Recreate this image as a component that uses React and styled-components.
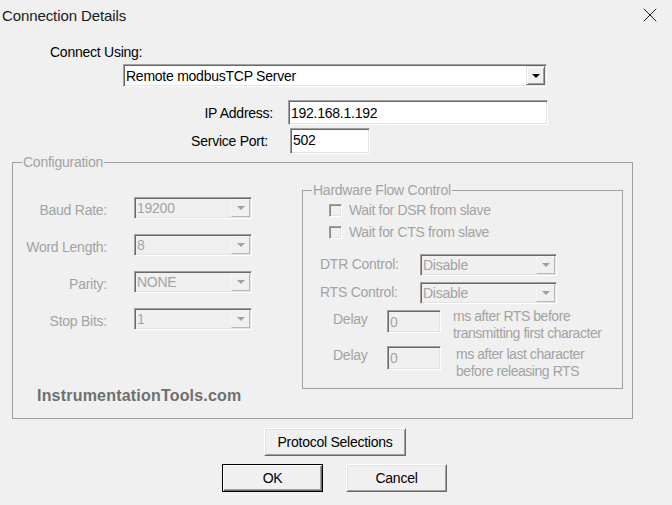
import React from 'react';
import styled, { createGlobalStyle } from 'styled-components';
import { X } from 'lucide-react';

const GlobalStyle = createGlobalStyle`
  html, body {
    margin: 0;
    padding: 0;
    background: #f0f0f0;
  }
  body {
    font-family: "Liberation Sans", Arial, sans-serif;
    font-size: 14px;
    letter-spacing: -0.25px;
    color: #000;
  }
  * {
    box-sizing: border-box;
  }
`;

const DISABLED = '#a3a3a3';

const Window = styled.div`
  width: 672px;
  height: 505px;
  background: #f0f0f0;
  overflow: hidden;
  display: flex;
  flex-direction: column;
`;

const TitleBar = styled.div`
  height: 30px;
  display: flex;
  align-items: center;
  justify-content: space-between;
  padding: 0 10px 0 2px;
`;

const Title = styled.div`
  font-size: 15px;
  letter-spacing: -0.1px;
  color: #1a1a1a;
`;

const Body = styled.div`
  display: flex;
  flex-direction: column;
  align-items: flex-start;
`;

const TopLabel = styled.div`
  margin: 14px 0 0 50px;
  line-height: 16px;
`;

const ComboBox = styled.div`
  display: flex;
  width: ${p => p.$w}px;
  height: ${p => p.$h || 22}px;
  margin: ${p => p.$margin || '0'};
  padding: 1px;
  background: ${p => (p.$disabled ? '#f0f0f0' : '#fff')};
  border: 1px solid;
  border-color: #a0a0a0 #fff #fff #a0a0a0;
  box-shadow: inset 1px 1px 0 #696969, inset -1px -1px 0 #e3e3e3;
`;

const ComboText = styled.div`
  flex: 1;
  display: flex;
  align-items: center;
  padding-left: 1px;
  color: ${p => (p.$disabled ? DISABLED : '#000')};
  white-space: nowrap;
`;

const ArrowButton = styled.div`
  width: 19px;
  display: flex;
  align-items: center;
  justify-content: center;
  background: #f0f0f0;
  border: 1px solid;
  border-color: ${p => (p.$disabled ? '#f4f4f4 #b8b8b8 #b8b8b8 #f4f4f4' : '#e3e3e3 #696969 #696969 #e3e3e3')};
  box-shadow: ${p => (p.$disabled ? 'none' : 'inset 1px 1px 0 #fff, inset -1px -1px 0 #a0a0a0')};
`;

const Triangle = styled.span`
  width: 0;
  height: 0;
  border-left: 4px solid transparent;
  border-right: 4px solid transparent;
  border-top: 4px solid ${p => (p.$disabled ? '#a0a0a0' : '#000')};
`;

const FieldRow = styled.div`
  display: grid;
  grid-template-columns: ${p => p.$label}px ${p => p.$w}px;
  column-gap: ${p => p.$gap}px;
  align-items: center;
  margin-top: ${p => p.$top}px;
`;

const RowLabel = styled.div`
  text-align: right;
  color: ${p => (p.$disabled ? DISABLED : '#000')};
`;

const TextField = styled.div`
  height: ${p => p.$h}px;
  width: ${p => (p.$w ? `${p.$w}px` : 'auto')};
  display: flex;
  align-items: ${p => (p.$top ? 'flex-start' : 'center')};
  padding: ${p => (p.$top ? '3px 2px 0' : '0 2px')};
  background: ${p => (p.$disabled ? '#f0f0f0' : '#fff')};
  color: ${p => (p.$disabled ? DISABLED : '#000')};
  border: 1px solid;
  border-color: #a0a0a0 #fff #fff #a0a0a0;
  box-shadow: inset 1px 1px 0 #696969, inset -1px -1px 0 #e3e3e3;
`;

const GroupBox = styled.div`
  position: relative;
  flex-shrink: 0;
  width: ${p => p.$w}px;
  height: ${p => p.$h}px;
  margin: ${p => p.$margin};
  border: 1px solid #a0a0a0;
  display: flex;
  flex-direction: ${p => p.$dir || 'row'};
  align-items: flex-start;
`;

const Legend = styled.span`
  position: absolute;
  top: -9px;
  left: 9px;
  padding: 0 1px;
  line-height: 16px;
  background: #f0f0f0;
  color: ${DISABLED};
`;

const SettingsGrid = styled.div`
  display: grid;
  grid-template-columns: 94px 118px;
  grid-template-rows: repeat(4, 22px) auto;
  column-gap: 27px;
  row-gap: 15px;
  align-items: center;
  padding-top: 34px;
`;

const SettingLabel = styled.div`
  text-align: right;
  color: ${DISABLED};
  padding-top: 3px;
`;

const Watermark = styled.div`
  grid-column: 1 / -1;
  margin: 42px 0 0 24px;
  font-size: 16px;
  font-weight: bold;
  letter-spacing: 0.2px;
  line-height: 18px;
  color: #6f6f6f;
`;

const CheckRow = styled.label`
  display: flex;
  align-items: center;
  gap: 7px;
  height: 14px;
  padding-left: 26px;
  margin-top: ${p => p.$top}px;
  color: ${DISABLED};
  letter-spacing: -0.35px;
`;

const CheckBox = styled.span`
  width: 13px;
  height: 13px;
  background: #f0f0f0;
  border: 1px solid;
  border-color: #a0a0a0 #fff #fff #a0a0a0;
  box-shadow: inset 1px 1px 0 #8a8a8a, inset -1px -1px 0 #e3e3e3;
`;

const ControlRow = styled.div`
  display: grid;
  grid-template-columns: 100px 137px;
  align-items: center;
  padding-left: 17px;
  margin-top: ${p => p.$top}px;
`;

const ControlLabel = styled.div`
  color: ${DISABLED};
  padding-bottom: 2px;
`;

const DelayRow = styled.div`
  display: flex;
  align-items: flex-start;
  padding-left: 30px;
  margin-top: ${p => p.$top}px;
`;

const DelayLabel = styled.div`
  width: 54px;
  padding-top: 1px;
  color: ${DISABLED};
`;

const DelayNote = styled.div`
  margin-left: ${p => p.$gap}px;
  margin-top: ${p => p.$shift}px;
  line-height: 17px;
  letter-spacing: -0.45px;
  color: ${DISABLED};
`;

const ButtonRow = styled.div`
  display: flex;
  gap: 23px;
  padding-left: ${p => p.$left}px;
  margin-top: ${p => p.$top}px;
`;

const Button = styled.button`
  width: ${p => p.$w}px;
  height: 28px;
  padding: 0;
  font: inherit;
  letter-spacing: -0.25px;
  color: #000;
  background: #f0f0f0;
  border: 1px solid;
  border-color: ${p => (p.$default ? '#000' : '#fff #696969 #696969 #fff')};
  box-shadow: ${p =>
    p.$default
      ? 'inset 1px 1px 0 #fff, inset -1px -1px 0 #696969, inset -2px -2px 0 #a0a0a0'
      : 'inset 1px 1px 0 #e3e3e3, inset -1px -1px 0 #a0a0a0'};
`;

const Combo = ({ value, w, h, disabled, margin }) => (
  <ComboBox $w={w} $h={h} $disabled={disabled} $margin={margin}>
    <ComboText $disabled={disabled}>{value}</ComboText>
    <ArrowButton $disabled={disabled}>
      <Triangle $disabled={disabled} />
    </ArrowButton>
  </ComboBox>
);

const settings = [
  ['Baud Rate:', '19200'],
  ['Word Length:', '8'],
  ['Parity:', 'NONE'],
  ['Stop Bits:', '1'],
];

const App = () => (
  <Window>
    <GlobalStyle />
    <TitleBar>
      <Title>Connection Details</Title>
      <X size={24} strokeWidth={1} color="#1a1a1a" />
    </TitleBar>
    <Body>
      <TopLabel>Connect Using:</TopLabel>
      <Combo value="Remote modbusTCP Server" w={424} h={23} margin="4px 0 0 123px" />

      <FieldRow $label={273} $w={260} $gap={15} $top={13}>
        <RowLabel>IP Address:</RowLabel>
        <TextField $h={25}>192.168.1.192</TextField>
      </FieldRow>
      <FieldRow $label={268} $w={80} $gap={22} $top={3}>
        <RowLabel>Service Port:</RowLabel>
        <TextField $h={26} $top>502</TextField>
      </FieldRow>

      <GroupBox $w={621} $h={257} $margin="8px 0 0 12px">
        <Legend>Configuration</Legend>
        <SettingsGrid>
          {settings.map(([label, value]) => (
            <React.Fragment key={label}>
              <SettingLabel>{label}</SettingLabel>
              <Combo value={value} w={118} disabled />
            </React.Fragment>
          ))}
          <Watermark>InstrumentationTools.com</Watermark>
        </SettingsGrid>

        <GroupBox $w={321} $h={199} $margin="27px 0 0 50px" $dir="column">
          <Legend>Hardware Flow Control</Legend>
          <CheckRow $top={12}>
            <CheckBox />
            Wait for DSR from slave
          </CheckRow>
          <CheckRow $top={8}>
            <CheckBox />
            Wait for CTS from slave
          </CheckRow>
          <ControlRow $top={15}>
            <ControlLabel>DTR Control:</ControlLabel>
            <Combo value="Disable" w={137} disabled />
          </ControlRow>
          <ControlRow $top={6}>
            <ControlLabel>RTS Control:</ControlLabel>
            <Combo value="Disable" w={137} disabled />
          </ControlRow>
          <DelayRow $top={6}>
            <DelayLabel>Delay</DelayLabel>
            <TextField $h={23} $w={54} $disabled>0</TextField>
            <DelayNote $gap={12} $shift={-2}>
              ms after RTS before
              <br />
              transmitting first character
            </DelayNote>
          </DelayRow>
          <DelayRow $top={4}>
            <DelayLabel>Delay</DelayLabel>
            <TextField $h={24} $w={54} $disabled>0</TextField>
            <DelayNote $gap={15} $shift={0}>
              ms after last character
              <br />
              before releasing RTS
            </DelayNote>
          </DelayRow>
        </GroupBox>
      </GroupBox>

      <ButtonRow $left={264} $top={9}>
        <Button $w={142}>Protocol Selections</Button>
      </ButtonRow>
      <ButtonRow $left={222} $top={8}>
        <Button $w={101} $default>OK</Button>
        <Button $w={101}>Cancel</Button>
      </ButtonRow>
    </Body>
  </Window>
);

export default App;
